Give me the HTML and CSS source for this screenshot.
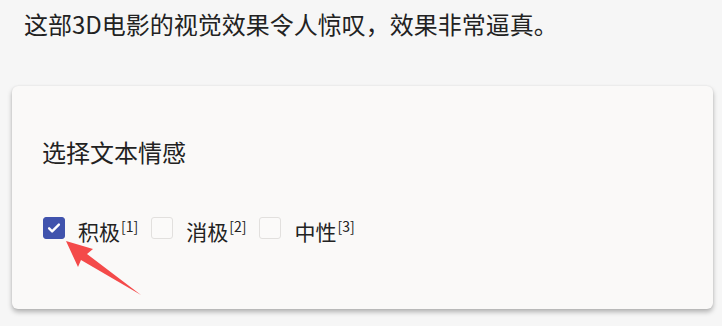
FILE: index.html
```html
<!DOCTYPE html>
<html lang="zh">

<head>
    <meta charset="UTF-8">
    <meta name="viewport" content="width=device-width, initial-scale=1.0">
    <title>文本情感</title>
    <link rel="stylesheet" href="styles.css">
</head>

<body>
    <p class="sentence">这部3D电影的视觉效果令人惊叹，效果非常逼真。</p>

    <div class="card">
        <h2 class="card-title">选择文本情感</h2>

        <div class="options">
            <label class="option">
                <span class="box checked">
                    <svg viewBox="0 0 24 24" width="18" height="18">
                        <path d="M5.5 12.5l4 4L18.5 7.5" fill="none" stroke="#fff" stroke-width="3.2" stroke-linecap="round" stroke-linejoin="round" />
                    </svg>
                </span>
                <span class="text">积极<sup>[1]</sup></span>
            </label>
            <label class="option">
                <span class="box"></span>
                <span class="text">消极<sup>[2]</sup></span>
            </label>
            <label class="option">
                <span class="box"></span>
                <span class="text">中性<sup>[3]</sup></span>
            </label>
        </div>

        <svg class="arrow" viewBox="0 0 80 60" width="80" height="60">
            <polygon points="1,1 28,9 22,14 76,55 16,20 13,27" fill="#f44a4a" />
        </svg>
    </div>
</body>

</html>
```

FILE: styles.css
```css
* {
    margin: 0;
    padding: 0;
    box-sizing: border-box;
}

body {
    width: 100%;
    min-height: 100vh;
    background-color: #f6f6f6;
    font-family: "Noto Sans CJK SC", "Noto Sans", sans-serif;
    color: #222;
}

.sentence {
    padding-left: 24px;
    font-size: 24px;
    line-height: 48px;
}

.card {
    position: relative;
    margin: 38px 9px 0 12px;
    padding: 50px 30px 70px;
    background-color: #faf9f8;
    border-radius: 6px;
    box-shadow: 0 3px 5px rgba(0, 0, 0, 0.28), 0 0 2px rgba(0, 0, 0, 0.08);
}

.card-title {
    font-size: 24px;
    font-weight: normal;
    line-height: 32px;
}

.options {
    margin-top: 49px;
    display: flex;
    gap: 13px;
    padding-left: 1px;
}

.option {
    display: flex;
    align-items: center;
    gap: 13px;
    height: 22px;
}

.box {
    width: 22px;
    height: 22px;
    border: 1px solid #e2e0de;
    border-radius: 3px;
    background-color: #fbfaf9;
    display: flex;
    align-items: center;
    justify-content: center;
}

.box.checked {
    background-color: #4053ad;
    border-color: #4053ad;
}

.text {
    font-size: 21px;
    line-height: 22px;
}

.text sup {
    font-size: 14px;
    vertical-align: 8px;
    margin-left: 1px;
}

.arrow {
    position: absolute;
    left: 53px;
    top: 154px;
}
```
